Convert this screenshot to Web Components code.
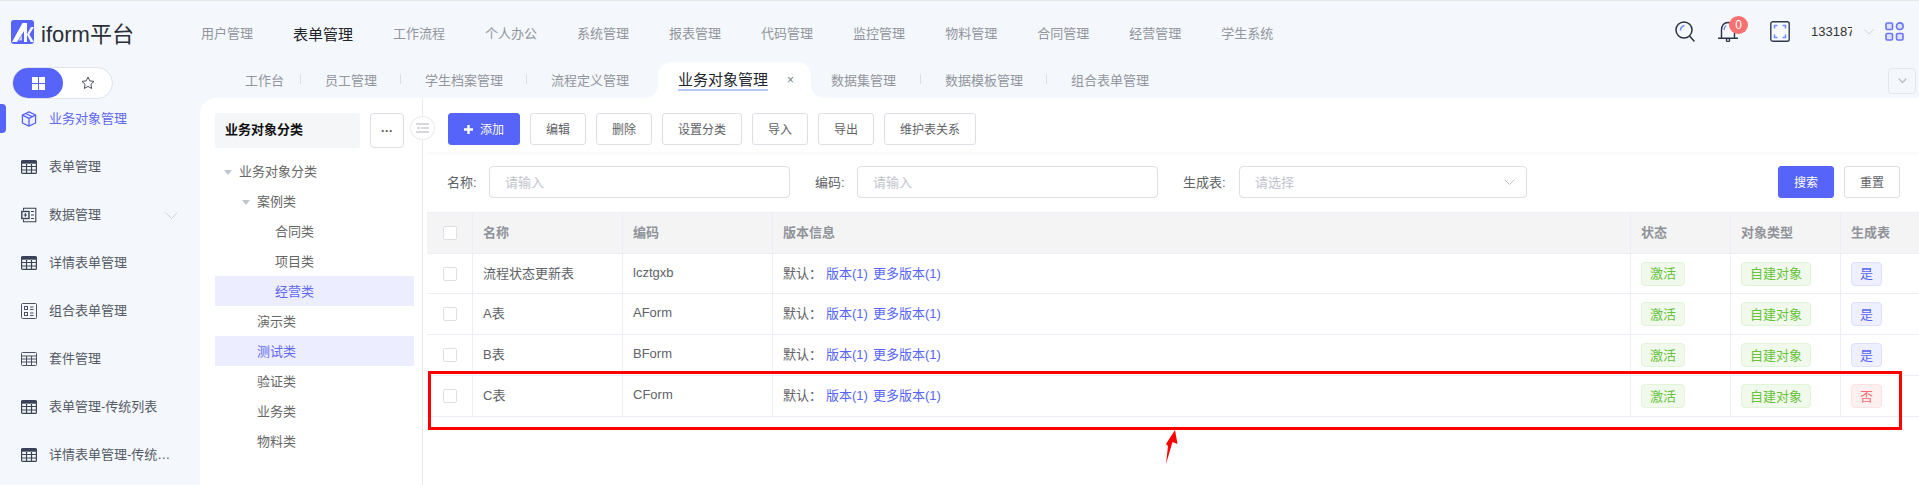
<!DOCTYPE html>
<html lang="zh">
<head>
<meta charset="utf-8">
<title>iform</title>
<style>
  html, body { margin: 0; height: 100%; overflow: hidden; }
  body {
    font: 13px "Liberation Sans", "Noto Sans CJK SC", sans-serif;
    background: #f4f7fb;
    color: #606266;
    display: flex;
    flex-direction: column;
    border-top: 1px solid #e6e6e6;
    box-sizing: border-box;
  }
  .row { display: flex; flex: 1; min-height: 0; }
  .col { display: flex; flex-direction: column; flex: 1; min-width: 0; }
  .page { display: flex; flex: 1; min-height: 0; background: #fff; border-top-left-radius: 16px; }
</style>
</head>
<body>
  <top-bar></top-bar>
  <div class="row">
    <side-bar>
      <side-item active icon="cube">业务对象管理</side-item>
      <side-item icon="table">表单管理</side-item>
      <side-item icon="data" more>数据管理</side-item>
      <side-item icon="table">详情表单管理</side-item>
      <side-item icon="combo">组合表单管理</side-item>
      <side-item icon="thin">套件管理</side-item>
      <side-item icon="table">表单管理-传统列表</side-item>
      <side-item icon="table">详情表单管理-传统列表</side-item>
    </side-bar>
    <div class="col">
      <tab-strip></tab-strip>
      <div class="page">
        <tree-panel>
          <tree-row caret>业务对象分类</tree-row>
          <tree-row level="1" caret>案例类</tree-row>
          <tree-row level="2">合同类</tree-row>
          <tree-row level="2">项目类</tree-row>
          <tree-row level="2" selected>经营类</tree-row>
          <tree-row level="1">演示类</tree-row>
          <tree-row level="1" selected>测试类</tree-row>
          <tree-row level="1">验证类</tree-row>
          <tree-row level="1">业务类</tree-row>
          <tree-row level="1">物料类</tree-row>
        </tree-panel>
        <object-view>
          <object-table>
            <object-row name="流程状态更新表" code="lcztgxb" gen="yes"></object-row>
            <object-row name="A表" code="AForm" gen="yes"></object-row>
            <object-row name="B表" code="BForm" gen="yes"></object-row>
            <object-row name="C表" code="CForm" gen="no"></object-row>
          </object-table>
        </object-view>
      </div>
    </div>
  </div>
  <red-callout></red-callout>

<script>
// small base class, every element just sets its shadow html
class Base extends HTMLElement {
  connectedCallback() {
    if (this.shadowRoot) return;
    this.attachShadow({ mode: 'open' });
    this.shadowRoot.innerHTML = this.render();
  }
}

const PRIMARY = '#5664fa';

const ICONS = {
  cube: `<svg width="16" height="16" viewBox="0 0 16 16" fill="none" stroke="${PRIMARY}" stroke-width="1.3" stroke-linejoin="round"><path d="M8 .8 14.6 4v8L8 15.2 1.4 12V4z" fill="#eef0ff"/><path d="M1.6 4.2 8 7.4l6.4-3.2M8 7.4v7.6M4.6 2.5l6.6 3.2"/></svg>`,
  table: `<svg width="16" height="16" viewBox="0 0 16 16" fill="none" stroke="#3a4356" stroke-width="1.2"><rect x=".6" y="1.6" width="14.8" height="12.8" rx="1"/><path d="M.6 3.2h14.8" stroke-width="3"/><path d="M.6 7.5h14.8M.6 11h14.8M5.5 5v9M10.5 5v9"/></svg>`,
  thin: `<svg width="16" height="16" viewBox="0 0 16 16" fill="none" stroke="#4a5264" stroke-width="1"><rect x=".5" y="1.5" width="15" height="13" rx="1"/><path d="M.5 5h15M.5 8h15M.5 11h15M5.5 5v9.5M10.5 5v9.5"/></svg>`,
  data: `<svg width="16" height="16" viewBox="0 0 16 16" fill="none" stroke="#3a4356" stroke-width="1.1"><path d="M2.5 3.5V1.2h12.3v13.6H2.5v-2.3"/><rect x=".8" y="4.5" width="7.2" height="7" stroke-width="1.4"/><path d="M4.4 6.3v3.4M2.7 8h3.4M10 4.5h3M10 8h3M10 11.5h3"/></svg>`,
  combo: `<svg width="16" height="16" viewBox="0 0 16 16" fill="none" stroke="#4a5264" stroke-width="1"><rect x=".5" y=".5" width="15" height="15" rx="1"/><rect x="3.5" y="3.5" width="3" height="3"/><rect x="3.5" y="9.5" width="3" height="3"/><path d="M9 4h3.5M9 6.5h3.5M9 10h3.5M9 12.5h3.5"/></svg>`
};

class TopBar extends Base {
  render() {
    const nav = ['用户管理', '表单管理', '工作流程', '个人办公', '系统管理', '报表管理', '代码管理', '监控管理', '物料管理', '合同管理', '经营管理', '学生系统'];
    return `
      <style>
        :host { display: flex; align-items: center; height: 61px; flex: none; padding-right: 15px; }
        .brand { display: flex; align-items: center; gap: 7px; width: 201px; padding-left: 11px; box-sizing: border-box; flex: none;
                 font-size: 22px; color: #2b2f38; }
        nav { display: flex; gap: 40px; padding-top: 3px; color: #92959d; white-space: nowrap; }
        nav .on { font-size: 15px; color: #1f2329; }
        .tools { margin-left: auto; display: flex; align-items: center; }
        .bell { position: relative; height: 21px; margin: 0 32px 0 23px; }
        .badge { position: absolute; left: 11px; top: -5px; width: 19px; height: 18px; border-radius: 50%; background: #f97070;
                 color: #fff; font-size: 12px; line-height: 18px; text-align: center; }
        .user { width: 41px; overflow: hidden; margin: 0 12px 0 21px; color: #333; white-space: nowrap; }
        svg { display: block; }
      </style>
      <div class="brand">
        <svg width="23" height="24" viewBox="0 0 23 24">
          <rect width="23" height="24" rx="3" fill="${PRIMARY}"/>
          <path d="M1 22 11.500 3H16v19h-3V11L6 22z" fill="#fff"/>
          <path d="M7.500 20.500 11 15v5.500z" fill="#c9ceff"/>
          <path d="M16 14.500 20 7h3l-4.700 7.500L23 22h-3.300z" fill="#fff"/>
        </svg>
        <span>iform平台</span>
      </div>
      <nav>${nav.map((t, i) => `<span class="${i === 1 ? 'on' : ''}">${t}</span>`).join('')}</nav>
      <div class="tools">
        <svg width="20" height="21" viewBox="0 0 20 21" fill="none" stroke="#2b3445" stroke-width="1.5">
          <circle cx="9" cy="9" r="8"/><path d="m15 15.500 4 4.500" stroke-linecap="round"/>
          <path d="M5.500 9.500C5.500 7 7 5 9.500 4.500" stroke="#6f8cff"/>
        </svg>
        <div class="bell">
          <svg width="20" height="21" viewBox="0 0 20 21" fill="none" stroke="#2b3445" stroke-width="1.4">
            <path d="M3.500 17V9C3.500 4.500 6 1.500 10 1.500s6.500 3 6.500 7.500v8M.5 17.300h19" stroke-linecap="round"/>
            <circle cx="10" cy="19" r="1.600"/>
            <path d="M6 9c0-2 .8-3.500 2.200-4.500" stroke="#6f8cff"/>
          </svg>
          <span class="badge">0</span>
        </div>
        <svg width="20" height="21" viewBox="0 0 20 21" fill="none">
          <rect x=".8" y=".8" width="18.400" height="19.400" rx="2" stroke="#2f394c" stroke-width="1.400" fill="#f8faff"/>
          <path d="M4.500 7.500v-3h3M12.500 4.500h3v3M15.500 13.500v3h-3M7.500 16.500h-3v-3" stroke="#6f8cff" stroke-width="1.500"/>
        </svg>
        <div class="user">133187</div>
        <svg width="10" height="6" viewBox="0 0 10 6" fill="none" stroke="#cfd4e0" stroke-width="1"><path d="m.5.500 4.500 4.500L9.500.500"/></svg>
        <svg style="margin-left:11px" width="19" height="19" viewBox="0 0 19 19" fill="#dfe3ff" stroke="#6a74f8" stroke-width="1.600">
          <rect x="1" y="1" width="6.500" height="6.500" rx="1.200"/><circle cx="14.800" cy="4.200" r="3.300"/>
          <rect x="1" y="11.500" width="6.500" height="6.500" rx="1.200"/><rect x="11.500" y="11.500" width="6.500" height="6.500" rx="1.200"/>
        </svg>
      </div>`;
  }
}

class SideBar extends Base {
  render() {
    return `
      <style>
        :host { display: block; width: 200px; flex: none; }
        .switch { display: flex; box-sizing: border-box; width: 101px; height: 32px; margin: 5px 0 -5px 12px; background: #fff;
                  border: 1px solid #e1e3ec; border-radius: 16px; }
        .pill { width: 50px; display: flex; align-items: center; justify-content: center; background: ${PRIMARY}; border-radius: 15px; }
        .star { flex: 1; display: flex; align-items: center; justify-content: center; }
      </style>
      <div class="switch">
        <div class="pill">
          <svg width="13" height="13" viewBox="0 0 13 13" fill="#fff"><rect width="6" height="6"/><rect x="7" width="6" height="6"/><rect y="7" width="6" height="6"/><rect x="7" y="7" width="6" height="6"/></svg>
        </div>
        <div class="star">
          <svg width="14" height="14" viewBox="0 0 14 14" fill="none" stroke="#4a4f5c" stroke-width="1"><path d="m7 1 1.800 3.900 4.200.500-3.100 2.900.800 4.200L7 10.400l-3.700 2.100.800-4.200L1 5.400l4.200-.500z" stroke-linejoin="round"/></svg>
        </div>
      </div>
      <slot></slot>`;
  }
}

class SideItem extends Base {
  render() {
    return `
      <style>
        :host { display: flex; align-items: center; height: 48px; color: ${this.hasAttribute('active') ? '#6168f5' : '#555a66'}; }
        .bar { width: 6px; height: 29px; margin-right: 15px; border-radius: 0 4px 4px 0; background: ${this.hasAttribute('active') ? PRIMARY : 'transparent'}; }
        svg { display: block; flex: none; margin-top: 1px; }
        .label { margin-left: 12px; padding-bottom: 2px; width: 122px; white-space: nowrap; overflow: hidden; text-overflow: ellipsis; }
        .more { margin-left: -6px; margin-top: 2px; }
      </style>
      <span class="bar"></span>
      ${ICONS[this.getAttribute('icon')]}
      <span class="label"><slot></slot></span>
      ${this.hasAttribute('more') ? '<svg class="more" width="13" height="7" viewBox="0 0 13 7" fill="none" stroke="#ccd1ea"><path d="m.5.500 6 6 6-6"/></svg>' : ''}`;
  }
}

class TabStrip extends Base {
  render() {
    return `
      <style>
        :host { display: flex; align-items: center; height: 36px; flex: none; padding-left: 45px; color: #92959d; white-space: nowrap; }
        i { width: 1px; height: 10px; background: #dcdfe6; flex: none; margin-bottom: 2px; }
        .t { padding: 0 23px 2px 24px; }
        .first { padding: 0 16px 2px 0; }
        .last { padding-right: 29px; }
        .active { position: relative; display: flex; align-items: center; height: 36px; width: 153px; box-sizing: border-box; padding-left: 20px;
                  background: #fff; border-radius: 14px 14px 0 0; font-size: 15px; color: #20242c; }
        .active::before, .active::after { content: ""; position: absolute; bottom: 0; width: 14px; height: 14px; }
        .active::before { left: -14px; background: radial-gradient(circle at 0 0, transparent 14px, #fff 14.500px); }
        .active::after { right: -14px; background: radial-gradient(circle at 100% 0, transparent 14px, #fff 14.500px); }
        .active b { font-weight: 400; line-height: 19px; border-bottom: 2px solid #b6c8f8; }
        .x { margin-left: 19px; font-size: 12px; color: #777b85; }
        .after { padding-left: 20px; padding-right: 24px; }
        .drop { margin: 2px 3px 0 auto; width: 28px; height: 26px; box-sizing: border-box; border: 1px solid #e3e6ed; border-radius: 4px;
                display: flex; align-items: center; justify-content: center; }
      </style>
      <span class="first">工作台</span><i></i>
      <span class="t">员工管理</span><i></i>
      <span class="t">学生档案管理</span><i></i>
      <span class="t last">流程定义管理</span>
      <span class="active"><b>业务对象管理</b><span class="x">×</span></span>
      <span class="t after">数据集管理</span><i></i>
      <span class="t">数据模板管理</span><i></i>
      <span class="t">组合表单管理</span>
      <span class="drop"><svg width="9" height="6" viewBox="0 0 9 6" fill="none" stroke="#b9bcc6" stroke-width="1.300"><path d="m.8.800 3.700 3.700L8.200.800"/></svg></span>`;
  }
}

class TreePanel extends Base {
  render() {
    return `
      <style>
        :host { display: block; position: relative; width: 223px; flex: none; box-sizing: border-box; padding: 15px 0 0 15px; border-right: 1px solid #e8eaef; }
        .head { display: flex; gap: 10px; margin-bottom: 8px; }
        .title { width: 145px; height: 35px; box-sizing: border-box; padding-left: 10px; line-height: 33px; background: #f5f6f8; border-radius: 3px;
                 font-weight: 700; color: #111; }
        .dots { width: 34px; height: 35px; box-sizing: border-box; border: 1px solid #dcdfe6; border-radius: 4px; text-align: center;
                line-height: 34px; font-size: 12px; font-weight: 700; color: #555; }
        .fold { position: absolute; right: -13px; top: 18px; width: 25px; height: 24px; box-sizing: border-box; background: #fff;
                border: 1px solid #e8eaef; border-radius: 50%; display: flex; align-items: center; justify-content: center; }
      </style>
      <div class="head"><div class="title">业务对象分类</div><div class="dots">···</div></div>
      <slot></slot>
      <span class="fold"><svg width="13" height="10" viewBox="0 0 13 10" fill="none" stroke="#c9ccd4" stroke-width="1.400"><path d="M0 1h13M5 5h8M0 9h13"/><path d="M3.500 3 1 5l2.500 2z" fill="#c9ccd4" stroke="none"/></svg></span>`;
  }
}

class TreeRow extends Base {
  render() {
    const level = +this.getAttribute('level') || 0;
    const sel = this.hasAttribute('selected');
    return `
      <style>
        :host { display: flex; align-items: center; width: 199px; height: 30px; padding: 0 0 2px ${24 + level * 18}px; box-sizing: border-box;
                background: ${sel ? '#ecedfe' : 'transparent'}; color: ${sel ? '#6168f5' : '#666'}; }
        .caret { width: 0; height: 0; margin: 4px 7px 0 -15px; border: 4px solid transparent; border-top: 5px solid #c0c4cc; border-bottom: 0; }
      </style>
      ${this.hasAttribute('caret') ? '<span class="caret"></span>' : ''}<slot></slot>`;
  }
}

class AppButton extends Base {
  render() {
    const p = this.hasAttribute('primary');
    return `
      <style>
        :host { display: inline-flex; align-items: center; justify-content: center; gap: 7px; height: 32px; padding: 0 15px 2px; box-sizing: border-box;
                border: 1px solid ${p ? PRIMARY : '#dcdfe6'}; border-radius: 3px; font-size: 12px; background: ${p ? PRIMARY : '#fff'}; color: ${p ? '#fff' : '#606266'}; flex: none; }
        svg { margin-top: 2px; }
      </style>
      ${this.hasAttribute('plus') ? '<svg width="9" height="9" viewBox="0 0 9 9" fill="#fff"><path d="M3.300 0h2.400v3.300H9v2.400H5.700V9H3.300V5.700H0V3.300h3.300z"/></svg>' : ''}<slot></slot>`;
  }
}

class FilterField extends Base {
  render() {
    const select = this.hasAttribute('select');
    return `
      <style>
        :host { display: flex; align-items: center; flex: none; color: #606266; }
        label { width: ${this.getAttribute('label-width')}px; white-space: nowrap; padding-bottom: 2px; }
        .box { width: ${this.getAttribute('box-width')}px; height: 32px; box-sizing: border-box; padding: 0 11px 0 15px; display: flex; align-items: center;
               justify-content: space-between; border: 1px solid #dcdfe6; border-radius: 4px; color: #c0c4cc; }
        .box span { padding-bottom: 2px; }
      </style>
      <label>${this.getAttribute('label')}:</label>
      <div class="box"><span>${this.getAttribute('hint')}</span>${select ? '<svg width="11" height="7" viewBox="0 0 11 7" fill="none" stroke="#c0c4cc"><path d="m.5.500 5 5 5-5"/></svg>' : ''}</div>`;
  }
}

class ObjectView extends Base {
  render() {
    return `
      <style>
        :host { display: block; flex: 1; min-width: 0; padding-left: 4px; }
        .bar { display: flex; gap: 10px; height: 55px; box-sizing: border-box; padding: 15px 0 0 21px; border-bottom: 1px solid #f7f8f9; box-shadow: 0 2px 2px #fbfbfc; }
        .filter { display: flex; align-items: center; height: 32px; margin: 13px 0 14px; padding: 0 19px 0 20px; }
        .actions { display: flex; gap: 10px; margin-left: auto; }
        filter-field + filter-field { margin-left: 25px; }
      </style>
      <div class="bar">
        <app-button primary plus>添加</app-button>
        <app-button>编辑</app-button>
        <app-button>删除</app-button>
        <app-button>设置分类</app-button>
        <app-button>导入</app-button>
        <app-button>导出</app-button>
        <app-button>维护表关系</app-button>
      </div>
      <div class="filter">
        <filter-field label="名称" hint="请输入" label-width="42" box-width="301"></filter-field>
        <filter-field label="编码" hint="请输入" label-width="42" box-width="301"></filter-field>
        <filter-field select label="生成表" hint="请选择" label-width="56" box-width="288"></filter-field>
        <div class="actions"><app-button primary>搜索</app-button><app-button>重置</app-button></div>
      </div>
      <slot></slot>`;
  }
}

const COLUMNS = '45px 150px 150px 858px 100px 110px 79px';

class ObjectTable extends Base {
  render() {
    const heads = ['', '名称', '编码', '版本信息', '状态', '对象类型', '生成表'];
    return `
      <style>
        :host { display: block; }
        .head { display: grid; grid-template-columns: ${COLUMNS}; height: 42px; box-sizing: border-box; background: #f4f4f5;
                border-top: 1px solid #ebeef5; border-bottom: 1px solid #ebeef5; font-weight: 700; color: #909399; }
        .head div { display: flex; align-items: center; padding: 0 0 3px 10px; border-left: 1px solid #ebeef5; }
        .head div:first-child { padding: 0 0 0 16px; border-left: 0; }
        .check { width: 14px; height: 14px; box-sizing: border-box; border: 1px solid #dcdfe6; border-radius: 2px; background: #fff; }
      </style>
      <div class="head">${heads.map((h, i) => `<div>${i ? h : '<span class="check"></span>'}</div>`).join('')}</div>
      <slot></slot>`;
  }
}

class ObjectRow extends Base {
  render() {
    const yes = this.getAttribute('gen') === 'yes';
    return `
      <style>
        :host { display: grid; grid-template-columns: ${COLUMNS}; height: 41px; box-sizing: border-box; border-bottom: 1px solid #ebeef5; color: #606266; }
        :host(:first-child) { height: 40px; }
        .c { display: flex; align-items: center; padding: 0 0 3px 10px; border-left: 1px solid #ebeef5; white-space: nowrap; }
        .c.box { padding: 0 0 0 16px; border-left: 0; }
        .c.tag { padding-bottom: 0; }
        .check { width: 14px; height: 14px; box-sizing: border-box; border: 1px solid #dcdfe6; border-radius: 2px; }
        a { color: ${PRIMARY}; margin-right: 5px; }
        .dflt { margin-right: 4px; }
      </style>
      <div class="c box"><span class="check"></span></div>
      <div class="c">${this.getAttribute('name')}</div>
      <div class="c">${this.getAttribute('code')}</div>
      <div class="c"><span class="dflt">默认：</span><a>版本(1)</a><a>更多版本(1)</a></div>
      <div class="c tag"><status-tag kind="green">激活</status-tag></div>
      <div class="c tag"><status-tag kind="green">自建对象</status-tag></div>
      <div class="c tag"><status-tag kind="${yes ? 'blue' : 'red'}">${yes ? '是' : '否'}</status-tag></div>`;
  }
}

class StatusTag extends Base {
  render() {
    const kinds = {
      green: ['#f0f9eb', '#e1f3d8', '#67c23a'],
      blue: ['#eeefff', '#dddffe', PRIMARY],
      red: ['#fef0f0', '#fde2e2', '#f56c6c']
    };
    const [bg, line, fg] = kinds[this.getAttribute('kind')];
    return `
      <style>
        :host { display: inline-flex; align-items: center; height: 24px; padding: 0 8px 2px; box-sizing: border-box; background: ${bg};
                border: 1px solid ${line}; border-radius: 4px; color: ${fg}; }
      </style>
      <slot></slot>`;
  }
}

// the red annotation sits over the table, drawn on the screenshot
class RedCallout extends Base {
  render() {
    return `
      <style>
        :host { position: absolute; left: 428px; top: 371px; width: 1474px; height: 59px; box-sizing: border-box; border: 3px solid #f00; pointer-events: none; }
        svg { position: absolute; left: 731px; top: 55px; }
      </style>
      <svg width="16" height="36" viewBox="0 0 16 36" fill="#f00"><path d="M13 1 15.500 15 10.500 13 4 35 6 17 4 15 8.500 8z"/></svg>`;
  }
}

customElements.define('top-bar', TopBar);
customElements.define('side-bar', SideBar);
customElements.define('side-item', SideItem);
customElements.define('tab-strip', TabStrip);
customElements.define('tree-panel', TreePanel);
customElements.define('tree-row', TreeRow);
customElements.define('app-button', AppButton);
customElements.define('filter-field', FilterField);
customElements.define('object-view', ObjectView);
customElements.define('object-table', ObjectTable);
customElements.define('object-row', ObjectRow);
customElements.define('status-tag', StatusTag);
customElements.define('red-callout', RedCallout);
</script>
</body>
</html>
